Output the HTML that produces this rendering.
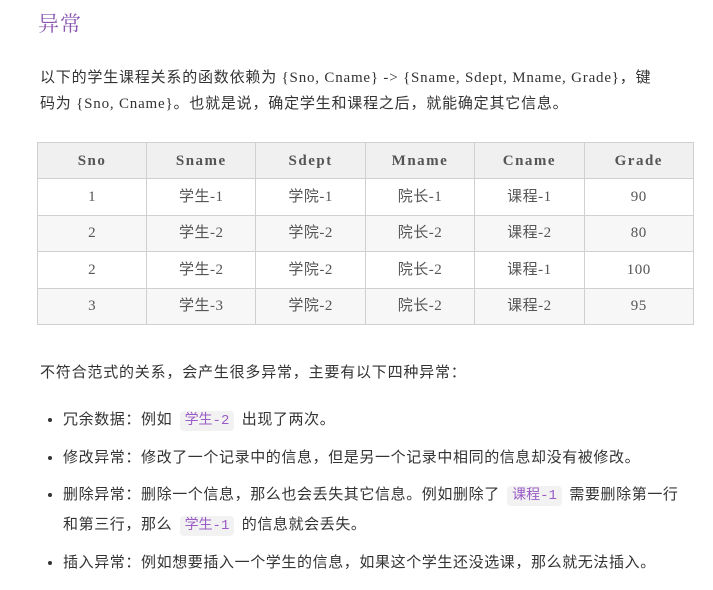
<!DOCTYPE html>
<html><head><meta charset="utf-8"><style>
body{margin:0;background:#fff;width:713px;height:590px;overflow:hidden;font-family:"Liberation Serif","Noto Sans CJK SC",sans-serif;color:#333;}
h2{position:absolute;left:38px;top:8px;margin:0;font-size:21px;font-weight:normal;color:#8a55b0;font-family:"Liberation Serif","Noto Serif CJK SC",serif;letter-spacing:1px}
.p{position:absolute;left:40px;font-size:15px;line-height:26px;letter-spacing:0.8px;white-space:nowrap}
table{position:absolute;left:37px;top:142px;border-collapse:collapse;width:657px;font-size:15px;color:#555;letter-spacing:0.5px}
td,th{border:1px solid #d0d0d0;text-align:center;width:109px;padding:0;line-height:20px;vertical-align:middle}
th{height:35px;background:#f0f0f0;font-weight:bold;letter-spacing:1.5px;color:#555}
td{height:35.5px}
tr.e td{background:#f7f7f7}
ul{position:absolute;left:20px;top:406px;margin:0;padding-left:43px;font-size:15px;line-height:29px;width:660px;letter-spacing:0.6px;white-space:nowrap}
li{margin-bottom:8px}
code{background:#f2f2f2;color:#9a5cc6;border-radius:4px;padding:2px 5px;font-family:"Liberation Mono","Noto Sans CJK SC",monospace;font-size:14px;margin:0 3px;letter-spacing:0}
</style></head><body>
<h2>异常</h2>
<div class="p" style="top:65px">以下的学生课程关系的函数依赖为 {Sno, Cname} -&gt; {Sname, Sdept, Mname, Grade}，键<br>码为 {Sno, Cname}。也就是说，确定学生和课程之后，就能确定其它信息。</div>
<table>
<tr><th>Sno</th><th>Sname</th><th>Sdept</th><th>Mname</th><th>Cname</th><th>Grade</th></tr>
<tr><td>1</td><td>学生-1</td><td>学院-1</td><td>院长-1</td><td>课程-1</td><td>90</td></tr>
<tr class="e"><td>2</td><td>学生-2</td><td>学院-2</td><td>院长-2</td><td>课程-2</td><td>80</td></tr>
<tr><td>2</td><td>学生-2</td><td>学院-2</td><td>院长-2</td><td>课程-1</td><td>100</td></tr>
<tr class="e"><td>3</td><td>学生-3</td><td>学院-2</td><td>院长-2</td><td>课程-2</td><td>95</td></tr>
</table>
<div class="p" style="top:360px">不符合范式的关系，会产生很多异常，主要有以下四种异常：</div>
<ul>
<li>冗余数据：例如 <code>学生-2</code> 出现了两次。</li>
<li>修改异常：修改了一个记录中的信息，但是另一个记录中相同的信息却没有被修改。</li>
<li>删除异常：删除一个信息，那么也会丢失其它信息。例如删除了 <code>课程-1</code> 需要删除第一行<br>和第三行，那么 <code>学生-1</code> 的信息就会丢失。</li>
<li>插入异常：例如想要插入一个学生的信息，如果这个学生还没选课，那么就无法插入。</li>
</ul>
</body></html>
